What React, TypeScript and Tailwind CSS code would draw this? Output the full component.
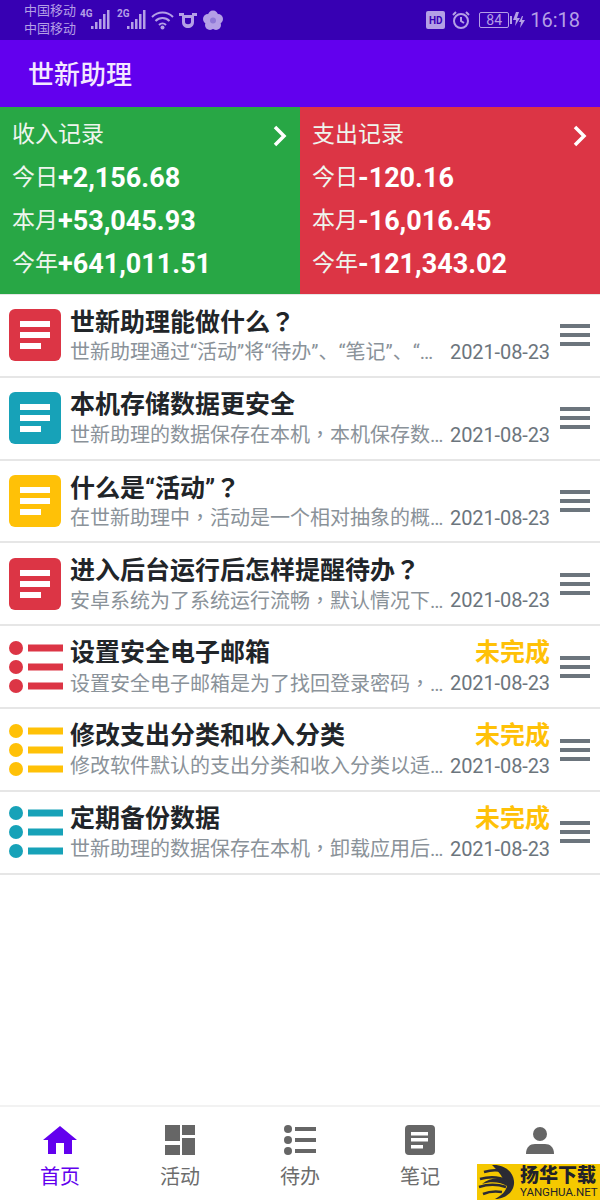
const FONT = "font-['Roboto','Noto_Sans_CJK_SC',sans-serif]";

const RED = "#dc3545";
const CYAN = "#17a2b8";
const YELLOW = "#ffc107";

type Item = {
  title: string;
  desc: string;
  color: string;
  kind: "note" | "todo";
};

const items: Item[] = [
  { title: "世新助理能做什么？", desc: "世新助理通过“活动”将“待办”、“笔记”、“…", color: RED, kind: "note" },
  { title: "本机存储数据更安全", desc: "世新助理的数据保存在本机，本机保存数…", color: CYAN, kind: "note" },
  { title: "什么是“活动”？", desc: "在世新助理中，活动是一个相对抽象的概…", color: YELLOW, kind: "note" },
  { title: "进入后台运行后怎样提醒待办？", desc: "安卓系统为了系统运行流畅，默认情况下…", color: RED, kind: "note" },
  { title: "设置安全电子邮箱", desc: "设置安全电子邮箱是为了找回登录密码，…", color: RED, kind: "todo" },
  { title: "修改支出分类和收入分类", desc: "修改软件默认的支出分类和收入分类以适…", color: YELLOW, kind: "todo" },
  { title: "定期备份数据", desc: "世新助理的数据保存在本机，卸载应用后…", color: CYAN, kind: "todo" },
];

// the phone draws ， and ？ centred in the cell, which is the TC form of these glyphs
const Punct = ({ text }: { text: string }) => (
  <>
    {text.split(/([，？])/).map((part, i) =>
      part === "，" || part === "？" ? (
        <span key={i} className="font-['Noto_Sans_CJK_TC',sans-serif]">
          {part}
        </span>
      ) : (
        part
      )
    )}
  </>
);

const NoteIcon = ({ color }: { color: string }) => (
  <svg width="52" height="52" viewBox="0 0 52 52">
    <rect width="52" height="52" rx="6" fill={color} />
    <rect x="11" y="12" width="30" height="6" fill="#fff" />
    <rect x="11" y="23" width="30" height="6" fill="#fff" />
    <rect x="11" y="34" width="21" height="6" fill="#fff" />
  </svg>
);

const TodoIcon = ({ color }: { color: string }) => (
  <svg width="54" height="52" viewBox="0 0 54 52">
    <circle cx="7" cy="7" r="7" fill={color} />
    <circle cx="7" cy="26" r="7" fill={color} />
    <circle cx="7" cy="45" r="7" fill={color} />
    <rect x="19" y="3.5" width="35" height="7" fill={color} />
    <rect x="19" y="22.5" width="35" height="7" fill={color} />
    <rect x="19" y="41.5" width="35" height="7" fill={color} />
  </svg>
);

const Row = ({ item }: { item: Item }) => (
  <div className="flex h-[82.83px] items-center border-b-2 border-[#e6e6e6] bg-white pl-[9px] pr-[10px]">
    <div className="w-[54px] shrink-0">
      {item.kind === "note" ? <NoteIcon color={item.color} /> : <TodoIcon color={item.color} />}
    </div>
    <div className="ml-[7px] min-w-0 flex-1">
      <div className="flex h-[33px] items-center justify-between">
        <span className="text-[25px] leading-[33px] font-bold text-[#212529]">
          <Punct text={item.title} />
        </span>
        {item.kind === "todo" && (
          <span className="text-[25px] leading-[33px] font-bold text-[#ffc107]">未完成</span>
        )}
      </div>
      <div className="flex h-[28px] items-center justify-between">
        <span className="text-[20px] leading-[28px] whitespace-nowrap text-[#8a9299]">
          <Punct text={item.desc} />
        </span>
        <span className="text-[20px] leading-[28px] tracking-[-0.1px] text-[#6c757d]">2021-08-23</span>
      </div>
    </div>
    <div className="ml-[10px] flex w-[30px] shrink-0 flex-col gap-[5px]">
      <div className="h-[4px] bg-[#6c757d]" />
      <div className="h-[4px] bg-[#6c757d]" />
      <div className="h-[4px] bg-[#6c757d]" />
    </div>
  </div>
);

const Chevron = () => (
  <svg width="14" height="22" viewBox="0 0 14 22" fill="none" stroke="#fff" strokeWidth="3.5">
    <path d="M2 2l9 9-9 9" />
  </svg>
);

const Money = ({ bg, title, lines }: { bg: string; title: string; lines: [string, string][] }) => (
  <div className={`flex h-[187px] flex-1 flex-col px-[12px] pt-[7px] text-white ${bg}`}>
    <div className="flex h-[43px] items-center justify-between pr-[1px]">
      <span className="text-[23px] text-[#eef5ee]">{title}</span>
      <Chevron />
    </div>
    {lines.map(([label, value]) => (
      <div key={label} className="flex h-[43px] items-center">
        <span className="text-[23px] text-[#eef5ee]">{label}</span>
        <span className="text-[27px] font-bold">{value}</span>
      </div>
    ))}
  </div>
);

const StatusBar = () => (
  <div className="flex h-[40px] items-center justify-between bg-[#3700b3] pl-[24px] pr-[20px] text-[#b49fe6]">
    <div className="flex items-center">
      <div className="text-[13px] leading-[18px]">
        <div>中国移动</div>
        <div>中国移动</div>
      </div>
      <svg width="146" height="26" viewBox="0 0 146 26" className="ml-[4px]" fill="currentColor">
        <text x="0" y="10" fontSize="10" fontWeight="700">4G</text>
        <rect x="11" y="19" width="2.5" height="3" />
        <rect x="15" y="15" width="2.5" height="7" />
        <rect x="19" y="12" width="2.5" height="10" />
        <rect x="23" y="7" width="2.5" height="15" />
        <rect x="27" y="3" width="2.5" height="19" />
        <text x="37" y="10" fontSize="10" fontWeight="700">2G</text>
        <rect x="47" y="19" width="2.5" height="3" />
        <rect x="51" y="15" width="2.5" height="7" />
        <rect x="55" y="12" width="2.5" height="10" />
        <rect x="59" y="7" width="2.5" height="15" />
        <rect x="63" y="3" width="2.5" height="19" />
        <g fill="none" stroke="currentColor" strokeWidth="2">
          <path d="M72 10c6-6 15-6 21 0" />
          <path d="M75.5 14c4-4 10-4 14 0" />
          <path d="M79 18c2-2 5-2 7 0" />
        </g>
        <circle cx="82.5" cy="20.5" r="2" />
        <path d="M102 8h3v7c0 3 6 3 6 0V8h3v7c0 8-12 8-12 0z" />
        <path d="M99 6h5v3h-5zM112 6h5v3h-5zM104 11h8v-3h-8z" />
        <g>
          <circle cx="133" cy="8.5" r="5" />
          <circle cx="128" cy="12" r="5" />
          <circle cx="138" cy="12" r="5" />
          <circle cx="130" cy="18" r="5" />
          <circle cx="136" cy="18" r="5" />
        </g>
        <circle cx="133" cy="13.5" r="3" fill="#8f78d6" />
      </svg>
    </div>
    <div className="flex items-center">
      <div className="flex h-[18px] w-[19px] items-center justify-center rounded-[2px] bg-[#b49fe6] text-[10px] font-bold text-[#3700b3]">HD</div>
      <svg width="20" height="20" viewBox="0 0 20 20" className="ml-[6px]" fill="none" stroke="currentColor" strokeWidth="2">
        <circle cx="10" cy="11" r="7" />
        <path d="M10 7v4l3 2M2 5l3-3M18 5l-3-3" />
      </svg>
      <div className="ml-[8px] flex h-[16px] w-[30px] items-center justify-center rounded-[2px] border border-[#b49fe6] text-[14px] leading-none">84</div>
      <div className="ml-[1px] h-[8px] w-[2px] bg-[#b49fe6]" />
      <svg width="12" height="18" viewBox="0 0 12 18" className="ml-[1px]" fill="currentColor">
        <path d="M3 1L0 9h3l-1 6 5-8H4l2-6zM9 5L6 11h2l-1 6 5-8H9l1-4z" />
      </svg>
      <span className="ml-[5px] text-[20px]">16:18</span>
    </div>
  </div>
);

const NavItem = ({ label, active, children }: { label?: string; active?: boolean; children: React.ReactNode }) => (
  <div className="flex flex-1 flex-col items-center">
    <div className="flex h-[30px] items-center justify-center">{children}</div>
    {label && (
      <span className={`mt-[9px] text-[20px] leading-[26px] ${active ? "text-[#6200ee]" : "text-[#6c6c6c]"}`}>{label}</span>
    )}
  </div>
);

const Watermark = () => (
  <div className="absolute right-0 bottom-0 flex h-[36px] w-[123px] items-center bg-[#f5c800] pl-[1px]">
    <svg width="38" height="36" viewBox="0 0 38 36" className="shrink-0">
      <path d="M14 1c10-1 21 5 22 16 1 10-8 18-19 18 7-4 11-8 12-13-6-4-16-5-25-2 6-5 14-7 21-5-2-5-7-10-11-14z" fill="#2b2b33" />
      <g fill="none" stroke="#2b2b33" strokeWidth="2.5">
        <path d="M6 8c10-3 19-2 25 3" />
        <path d="M2 15c10-3 20-2 28 2" />
        <path d="M1 23c9-3 18-3 27 0" />
        <path d="M5 30c7-3 13-3 19-2" />
      </g>
    </svg>
    <div className="ml-[4px] flex flex-col items-start">
      <span className="text-[19px] leading-[20px] font-black text-[#22222a]">扬华下载</span>
      <span className="text-[11.5px] leading-[12px] text-[#22222a]">YANGHUA.NET</span>
    </div>
  </div>
);

const App = () => {
  return (
    <div className={`relative flex h-[1200px] w-[600px] flex-col overflow-hidden bg-white ${FONT}`}>
      <StatusBar />
      <div className="flex h-[67px] items-center bg-[#6200ee] pt-[3px] pl-[28px] text-[26px] font-medium text-[#f3e8ff]">世新助理</div>

      <div className="flex">
        <Money
          bg="bg-[#28a745]"
          title="收入记录"
          lines={[
            ["今日", "+2,156.68"],
            ["本月", "+53,045.93"],
            ["今年", "+641,011.51"],
          ]}
        />
        <Money
          bg="bg-[#dc3545]"
          title="支出记录"
          lines={[
            ["今日", "-120.16"],
            ["本月", "-16,016.45"],
            ["今年", "-121,343.02"],
          ]}
        />
      </div>

      <div className="flex-1 border-t border-[#e6e6e6] bg-white">
        {items.map((item) => (
          <Row key={item.title} item={item} />
        ))}
      </div>

      <div className="flex h-[95px] items-start border-t-2 border-[#f2f2f2] bg-white pt-[18px]">
        <NavItem label="首页" active>
          <svg width="34" height="28" viewBox="0 0 34 28" fill="#6200ee">
            <path d="M17 0L0 14h5v14h8V17h8v11h8V14h5z" />
          </svg>
        </NavItem>
        <NavItem label="活动">
          <svg width="30" height="30" viewBox="0 0 30 30" fill="#666">
            <rect width="15" height="16" />
            <rect x="17" width="13" height="10" />
            <rect x="17" y="13" width="13" height="17" />
            <rect y="20" width="15" height="10" />
          </svg>
        </NavItem>
        <NavItem label="待办">
          <svg width="32" height="30" viewBox="0 0 32 30" fill="#666">
            <circle cx="4" cy="4" r="4" />
            <circle cx="4" cy="15" r="4" />
            <circle cx="4" cy="26" r="4" />
            <rect x="11" y="2" width="21" height="4" />
            <rect x="11" y="13" width="21" height="4" />
            <rect x="11" y="24" width="21" height="4" />
          </svg>
        </NavItem>
        <NavItem label="笔记">
          <svg width="30" height="30" viewBox="0 0 30 30">
            <rect width="30" height="30" rx="4" fill="#666" />
            <rect x="6" y="7" width="17" height="3.5" fill="#fff" />
            <rect x="6" y="13" width="17" height="3.5" fill="#fff" />
            <rect x="6" y="20" width="12" height="3.5" fill="#fff" />
          </svg>
        </NavItem>
        <NavItem>
          <svg width="28" height="28" viewBox="0 0 28 28" fill="#666">
            <circle cx="14" cy="8" r="7" />
            <path d="M0 28c0-7 4-10 9-10h10c5 0 9 3 9 10z" />
          </svg>
        </NavItem>
      </div>

      <Watermark />
    </div>
  );
};

export default App;
